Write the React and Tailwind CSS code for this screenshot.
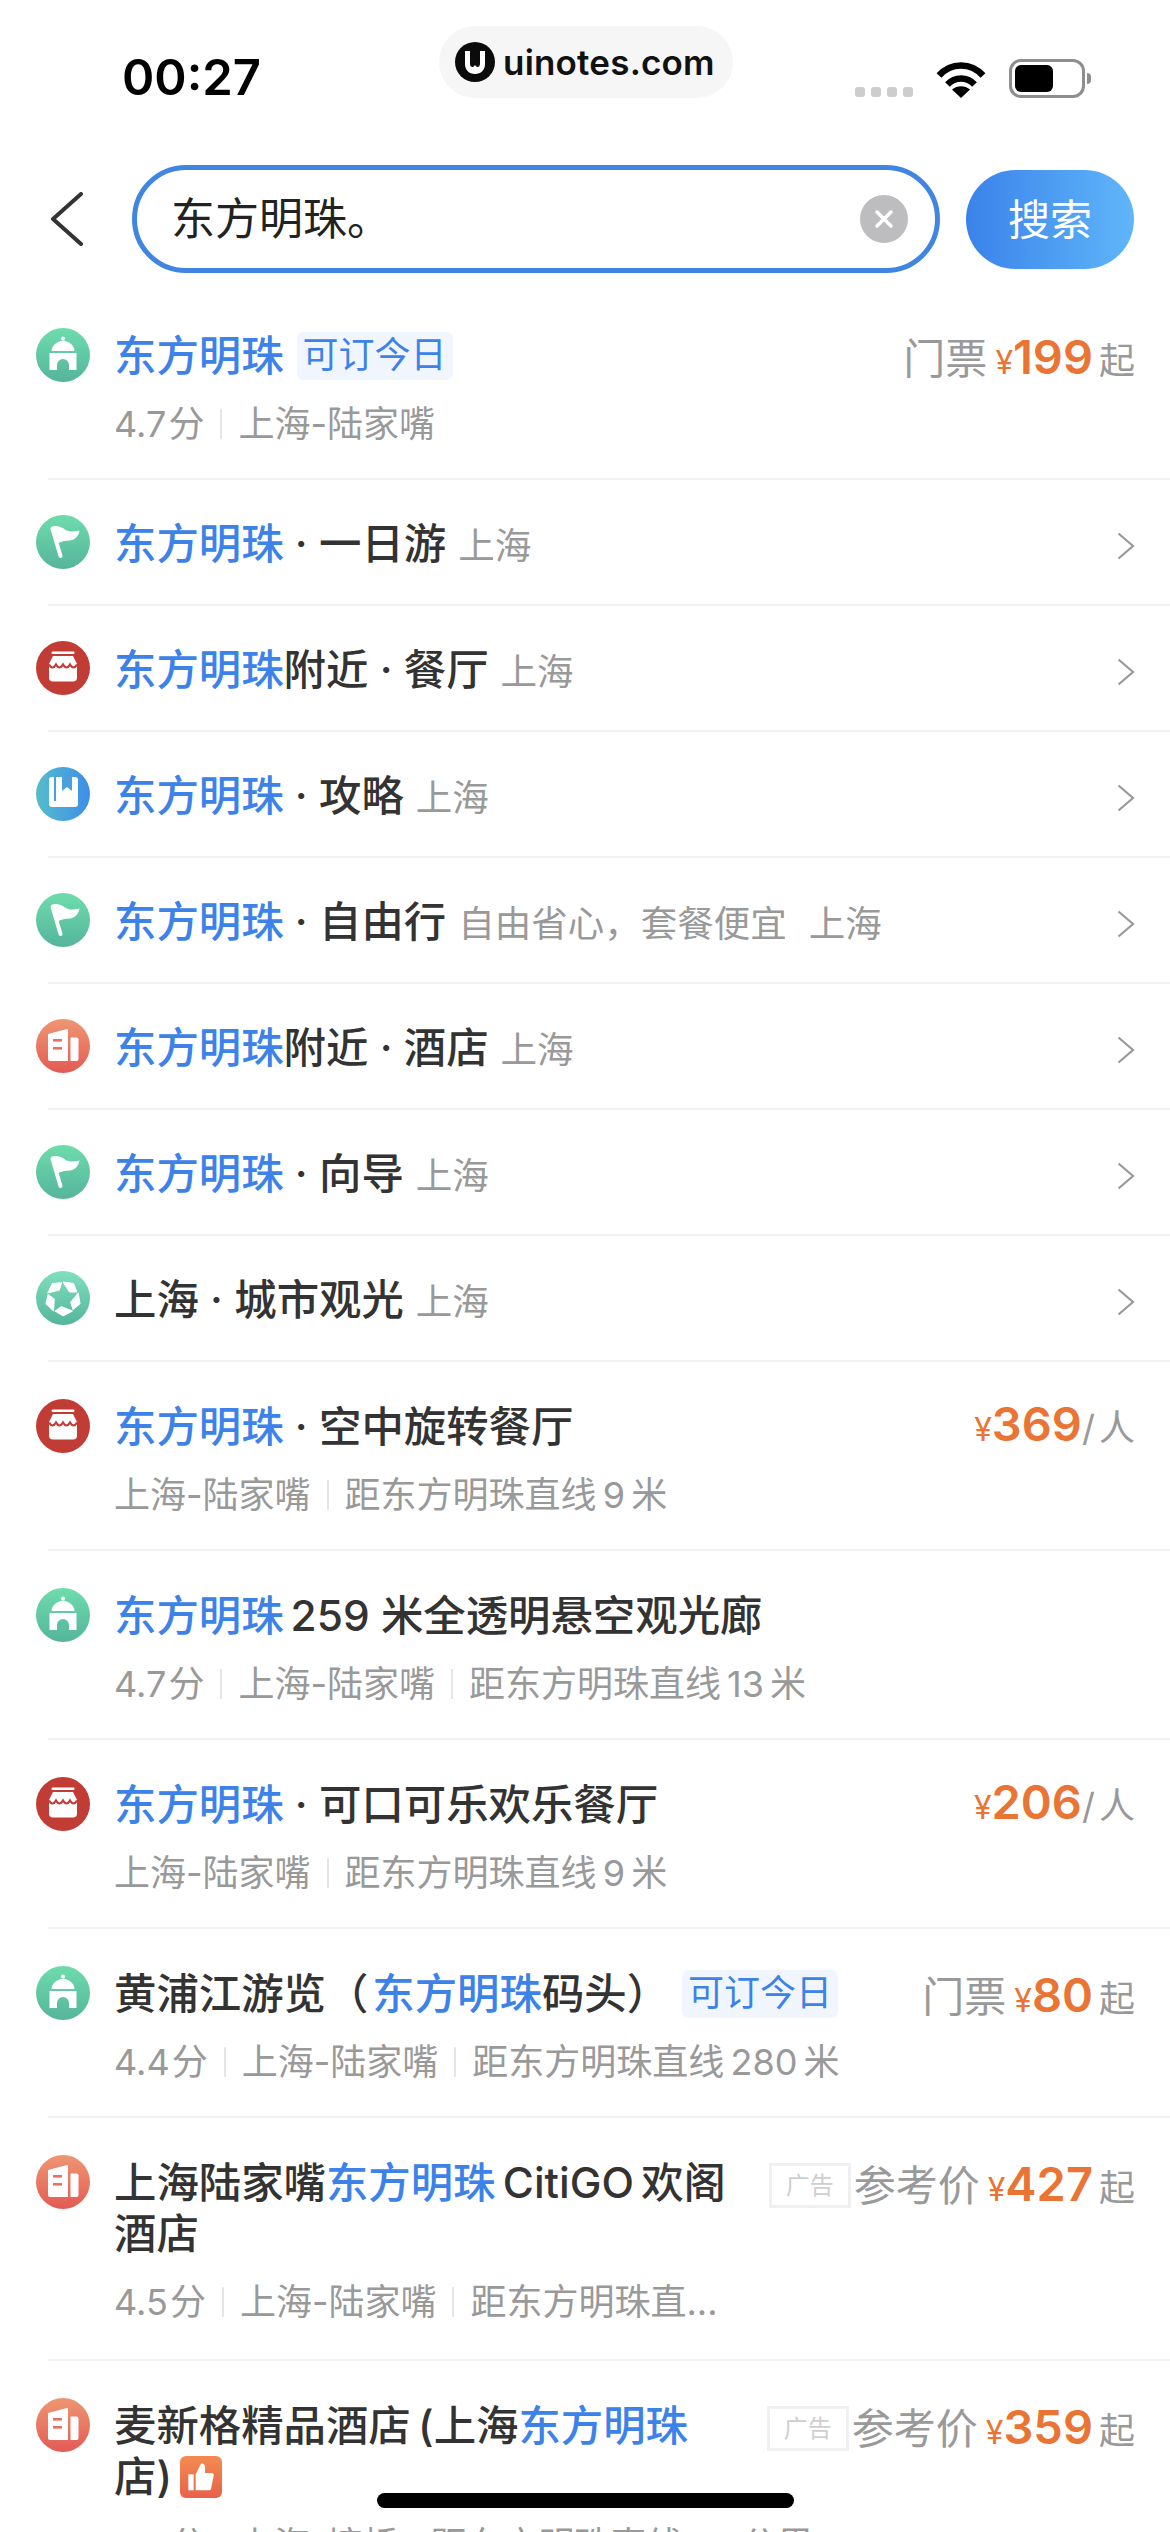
import React from 'react'

const Blue = ({ children, className = '' }) => <span className={`text-[#3c82e9] ${className}`}>{children}</span>

function Building() {
    return (
        <svg viewBox="0 0 54 54" className="h-[54px] w-[54px]" fill="#fff">
            <circle cx="27" cy="10.5" r="2" />
            <path d="M15.5 23c0-5.500 5.500-9.500 11.500-10.500 6 1 11.500 5 11.500 10.500z" />
            <path d="M13.500 25h27v17h-7.500v-5a6 6 0 0 0-12 0v5h-7.500z" />
        </svg>
    )
}

function Flag() {
    return (
        <svg viewBox="0 0 54 54" className="h-[54px] w-[54px]" fill="#fff">
            <path d="M16.500 14l8 27" stroke="#fff" strokeWidth="4" strokeLinecap="round" />
            <path d="M15 12c5-2 10-.5 14 2.500 4 2.500 9 2.500 14.500 1-.5 5-4.500 9.500-10 10-4.500.5-8 .5-12.500 3.500z" />
        </svg>
    )
}

function Store() {
    return (
        <svg viewBox="0 0 54 54" className="h-[54px] w-[54px]">
            <rect x="15.500" y="10.500" width="23" height="2.600" rx="1" fill="#fff" />
            <path d="M17 15h20l4 8v13.500a4 4 0 0 1-4 4H17a4 4 0 0 1-4-4V23z" fill="#fff" />
            <path d="M13 23.500q3.500 6 7 0q3.500 6 7 0q3.500 6 7 0q3.500 6 7 0" fill="none" stroke="#c03c35" strokeWidth="2.200" />
        </svg>
    )
}

function Hotel() {
    return (
        <svg viewBox="0 0 54 54" className="h-[54px] w-[54px]" fill="#fff">
            <path d="M12 15l19-5a1 1 0 0 1 1 1v31H14a2 2 0 0 1-2-2z" />
            <path d="M34.500 18.500h6a2 2 0 0 1 2 2V40a2 2 0 0 1-2 2h-6z" />
            <rect x="17" y="20" width="9" height="2.600" fill="#e9705f" />
            <rect x="17" y="28" width="9" height="2.600" fill="#e9705f" />
        </svg>
    )
}

function Book() {
    return (
        <svg viewBox="0 0 54 54" className="h-[54px] w-[54px]">
            <rect x="13" y="10" width="29" height="30" rx="3" fill="#fff" />
            <path d="M19 10v24" stroke="#4a9fdc" strokeWidth="2" />
            <path d="M26 10h10v14l-5-4-5 4z" fill="#4a9fdc" />
        </svg>
    )
}

function Star() {
    return (
        <svg viewBox="0 0 54 54" className="h-[54px] w-[54px]">
            {[0, 72, 144, 216, 288].map((a) => (
                <path
                    key={a}
                    d="M27 11l10.500 1.500 3.500 8.500h-7.500z"
                    fill="#fff"
                    stroke="#fff"
                    strokeWidth="1"
                    strokeLinejoin="round"
                    transform={`rotate(${a} 27 27)`}
                />
            ))}
        </svg>
    )
}

const kinds = {
    sight: { cls: 'bg-linear-to-b from-[#6edcac] to-[#55b59b]', icon: <Building /> },
    flag: { cls: 'bg-linear-to-b from-[#6edcac] to-[#55b59b]', icon: <Flag /> },
    store: { cls: 'bg-[#c03c35]', icon: <Store /> },
    guide: { cls: 'bg-linear-to-r from-[#57bccb] to-[#3f8de7]', icon: <Book /> },
    hotel: { cls: 'bg-linear-to-b from-[#ee9672] to-[#e25a55]', icon: <Hotel /> },
    star: { cls: 'bg-linear-to-b from-[#7fe0bd] to-[#55b59b]', icon: <Star /> },
}

function RowIcon({ kind }) {
    const k = kinds[kind]
    return <div className={`h-[54px] w-[54px] shrink-0 overflow-hidden rounded-full ${k.cls}`}>{k.icon}</div>
}

const Divider = () => <div className="ml-12 h-[2px] bg-[#f3f3f3]" />

function Chevron() {
    return (
        <svg viewBox="0 0 18 28" className="mt-2 h-[28px] w-[18px] shrink-0" fill="none" stroke="#999" strokeWidth="2.200">
            <path d="M1.500 1.500L16 14 1.500 26.500" />
        </svg>
    )
}

function LinkRow({ kind, title, note, gap }) {
    return (
        <>
            <div className="flex h-[124px] items-center pl-9 pr-[35px]">
                <RowIcon kind={kind} />
                <div className="ml-6 mt-[3px] flex min-w-0 flex-1 items-baseline whitespace-nowrap">
                    <span className="text-[42.4px] font-medium text-[#333]">{title}</span>
                    {gap && <span className="ml-3 text-[36.5px] text-[#999]">{gap}</span>}
                    <span className={`${gap ? 'ml-[22px]' : 'ml-3'} text-[36.5px] text-[#999]`}>{note}</span>
                </div>
                <Chevron />
            </div>
            <Divider />
        </>
    )
}

const Tag = () => (
    <span className="ml-[13px] inline-flex h-[48px] w-[156px] items-center justify-center rounded-[6px] bg-[#f1f6fe] text-[36px] font-normal text-[#3c82e9]">
        可订今日
    </span>
)

function Sub({ parts, rated }) {
    return (
        <div className="mt-[18px] flex h-[50px] items-center whitespace-nowrap text-[36px] text-[#999] [word-spacing:-4px]">
            {parts.map((p, i) => (
                <React.Fragment key={i}>
                    {i > 0 && <span className="mx-[16px] h-[30px] w-[2px] bg-[#e6e6e6]" />}
                    <span className={rated && i === 0 ? '[word-spacing:-8px]' : ''}>{p}</span>
                </React.Fragment>
            ))}
        </div>
    )
}

function Price({ label, value, unit, ad, perPerson }) {
    return (
        <div className="flex shrink-0 items-baseline whitespace-nowrap">
            {ad && (
                <span className="mr-[3px] flex h-[45px] w-[82px] items-center justify-center self-center border-[3px] border-[#f0f0f0] text-[24px] text-[#cfcfcf]">
                    广告
                </span>
            )}
            {label && <span className="mr-2 text-[42px] text-[#999]">{label}</span>}
            <span className="text-[32px] text-[#e97434]">¥</span>
            <span className="text-[47px] leading-[51px] font-semibold text-[#e97434]">{value}</span>
            <span className={`${perPerson ? '[word-spacing:-6px]' : 'ml-[6px]'} text-[36px] text-[#999]`}>{unit}</span>
        </div>
    )
}

function InfoRow({ kind, title, sub, price, height = 'h-[187px]', narrow, clip, rated }) {
    return (
        <>
            <div className={`flex ${height} items-start pl-9 pr-[35px] pt-[37px]`}>
                <RowIcon kind={kind} />
                <div className="ml-6 flex min-w-0 flex-1 justify-between">
                    <div className={`${narrow ? 'w-[615px]' : ''} min-w-0`}>
                        <div className="mt-[2px] flex min-h-[51px] items-center whitespace-nowrap text-[42.4px] leading-[51px] font-medium text-[#333]">
                            <div>{title}</div>
                        </div>
                        <Sub parts={sub} rated={rated} />
                    </div>
                    {price && <div className="-mt-px"><Price {...price} /></div>}
                </div>
            </div>
            {!clip && <Divider />}
        </>
    )
}

function StatusBar() {
    return (
        <div className="relative flex h-[150px] items-start justify-between pl-[122px] pr-[85px] pt-[49px]">
            <span className="text-[49px] leading-[58px] font-semibold text-black">00:27</span>

            <div className="absolute left-[439px] top-[26px] flex h-[72px] w-[294px] items-center rounded-[36px] bg-[#f6f6f6] pl-4">
                <svg viewBox="0 0 40 40" className="h-[40px] w-[40px]">
                    <circle cx="20" cy="20" r="20" fill="#0b0b0b" />
                    <path d="M10 9h5v12c0 3 1 4 2.500 4 1 0 1.500-.7 2.500-2 1 1.300 1.500 2 2.500 2 1.500 0 2.500-1 2.500-4V9h5v13c0 6-4 10-10 10S10 28 10 22z" fill="#fff" />
                </svg>
                <span className="ml-2 text-[35px] font-semibold tracking-[0.2px] text-[#111]">uinotes.com</span>
            </div>

            <div className="flex items-end pt-[10px]">
                <div className="mb-[1px] flex gap-[6px]">
                    {[0, 1, 2, 3].map((i) => (
                        <span key={i} className="h-[10px] w-[10px] rounded-[3px] bg-[#cdcdcd]" />
                    ))}
                </div>
                <svg viewBox="0 0 50 37" className="ml-[23px] h-[37px] w-[50px]" fill="none" stroke="#000" strokeWidth="6.500">
                    <path d="M3 14.500C15 1 35 1 47 14.500" />
                    <path d="M11.500 23.500C19 15.500 31 15.500 38.500 23.500" />
                    <path d="M25 37l-9-8.500c5-4.500 13-4.500 18 0z" fill="#000" stroke="none" />
                </svg>
                <div className="relative ml-[23px] flex h-[39px] w-[76px] items-center rounded-[12px] border-[3px] border-[#8e8e8e] pl-[3px]">
                    <div className="h-[27px] w-[38px] rounded-[6px] bg-black" />
                    <span className="absolute -right-[9px] top-[11px] h-[11px] w-[4px] rounded-r-[4px] bg-[#8e8e8e]" />
                </div>
            </div>
        </div>
    )
}

function SearchBar() {
    return (
        <div className="mb-[18px] mt-[15px] flex h-[108px] items-center pl-[50px] pr-9">
            <svg viewBox="0 0 34 54" className="h-[54px] w-[34px] shrink-0" fill="none" stroke="#333" strokeWidth="4" strokeLinecap="round" strokeLinejoin="round">
                <path d="M31 2L3 27l28 25" />
            </svg>
            <div className="ml-[48px] flex h-[108px] w-[811px] items-center rounded-full border-[5px] border-[#4185e2] pl-[34px] pr-[27px]">
                <span className="flex-1 text-[44px] text-[#222]">东方明珠。</span>
                <span className="flex h-[48px] w-[48px] items-center justify-center rounded-full bg-[#bdbdc0]">
                    <svg viewBox="0 0 24 24" className="h-[24px] w-[24px]" stroke="#fff" strokeWidth="3.500" strokeLinecap="round">
                        <path d="M5 5l14 14M19 5L5 19" />
                    </svg>
                </span>
            </div>
            <button className="ml-[26px] h-[99px] w-[168px] shrink-0 rounded-full bg-linear-to-r from-[#3a82ea] to-[#60b6f9] text-[42px] text-white">
                搜索
            </button>
        </div>
    )
}

export default function App() {
    return (
        <div
            className="relative h-[2532px] w-[1170px] overflow-hidden bg-white"
            style={{ fontFamily: 'Inter, "Noto Sans CJK SC", sans-serif' }}
        >
            <StatusBar />
            <SearchBar />

            <InfoRow
                kind="sight"
                rated
                title={<span className="flex items-center"><Blue>东方明珠</Blue><Tag /></span>}
                sub={['4.7 分', '上海-陆家嘴']}
                price={{ label: '门票', value: '199', unit: '起' }}
            />
            <LinkRow kind="flag" title={<><Blue>东方明珠</Blue> · 一日游</>} note="上海" />
            <LinkRow kind="store" title={<><Blue>东方明珠</Blue>附近 · 餐厅</>} note="上海" />
            <LinkRow kind="guide" title={<><Blue>东方明珠</Blue> · 攻略</>} note="上海" />
            <LinkRow kind="flag" title={<><Blue>东方明珠</Blue> · 自由行</>} gap="自由省心，套餐便宜" note="上海" />
            <LinkRow kind="hotel" title={<><Blue>东方明珠</Blue>附近 · 酒店</>} note="上海" />
            <LinkRow kind="flag" title={<><Blue>东方明珠</Blue> · 向导</>} note="上海" />
            <LinkRow kind="star" title="上海 · 城市观光" note="上海" />

            <InfoRow
                kind="store"
                title={<><Blue>东方明珠</Blue> · 空中旋转餐厅</>}
                sub={['上海-陆家嘴', '距东方明珠直线 9 米']}
                price={{ value: '369', unit: '/ 人', perPerson: true }}
            />
            <InfoRow
                kind="sight"
                rated
                title={<><Blue>东方明珠</Blue><span className="ml-[7px]">259 米全透明悬空观光廊</span></>}
                sub={['4.7 分', '上海-陆家嘴', '距东方明珠直线 13 米']}
            />
            <InfoRow
                kind="store"
                title={<><Blue>东方明珠</Blue> · 可口可乐欢乐餐厅</>}
                sub={['上海-陆家嘴', '距东方明珠直线 9 米']}
                price={{ value: '206', unit: '/ 人', perPerson: true }}
            />
            <InfoRow
                kind="sight"
                rated
                title={<span className="flex items-center">黄浦江游览（<Blue className="ml-[4px]">东方明珠</Blue>码头）<Tag /></span>}
                sub={['4.4 分', '上海-陆家嘴', '距东方明珠直线 280 米']}
                price={{ label: '门票', value: '80', unit: '起' }}
            />
            <InfoRow
                kind="hotel"
                height="h-[241px]"
                narrow
                rated
                title={<span className="[word-spacing:-4px]">上海陆家嘴<Blue>东方明珠</Blue> CitiGO 欢阁<br />酒店</span>}
                sub={['4.5 分', '上海-陆家嘴', '距东方明珠直...']}
                price={{ ad: true, label: '参考价', value: '427', unit: '起' }}
            />
            <InfoRow
                kind="hotel"
                height="h-[241px]"
                narrow
                clip
                rated
                title={
                    <span className="[word-spacing:-4px]">
                        麦新格精品酒店 (上海<Blue>东方明珠</Blue>
                        <br />
                        <span className="inline-flex items-center">
                            店)
                            <span className="ml-[8px] inline-flex h-[42px] w-[42px] items-center justify-center rounded-[6px] bg-linear-to-b from-[#f28c50] to-[#e8604a]">
                                <svg viewBox="0 0 24 24" className="h-[32px] w-[32px]" fill="#fff">
                                    <rect x="2.500" y="10" width="4" height="12" />
                                    <path d="M8 10l4-8c1.500-.5 3 .5 3 2.500V9h5c1 0 1.800 1 1.500 2l-2 10c-.2.600-.8 1-1.500 1H8z" />
                                </svg>
                            </span>
                        </span>
                    </span>
                }
                sub={['4.6 分', '上海-塘桥', '距东方明珠直线 1.5 公里']}
                price={{ ad: true, label: '参考价', value: '359', unit: '起' }}
            />

            <div className="absolute bottom-[24px] left-[377px] h-[15px] w-[417px] rounded-full bg-black" />
        </div>
    )
}
